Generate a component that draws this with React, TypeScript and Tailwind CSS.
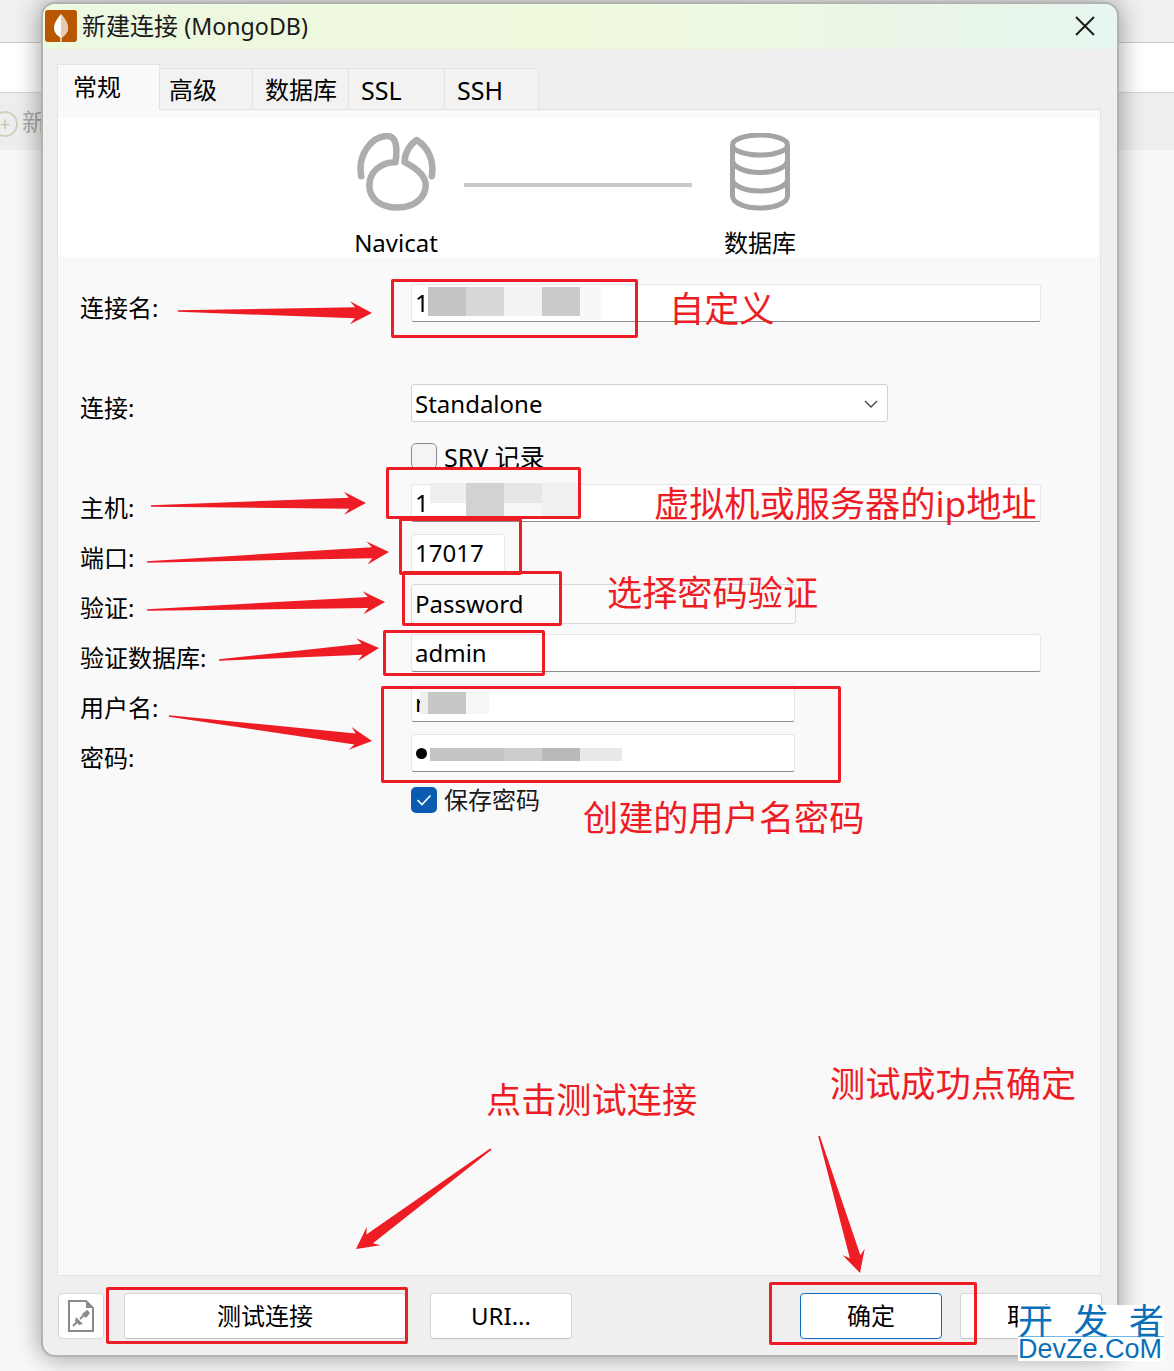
const FONT = "font-['Noto_Sans','Noto_Sans_CJK_SC',sans-serif]";

type Seg = { x: number; y: number; w: number; h: number; c: string };
const mosaics: Seg[] = [
  { x: 428, y: 287, w: 38, h: 29, c: '#c4c4c4' },
  { x: 466, y: 287, w: 38, h: 29, c: '#d8d8d8' },
  { x: 504, y: 287, w: 38, h: 29, c: '#f3f3f3' },
  { x: 542, y: 287, w: 38, h: 29, c: '#cbcbcb' },
  { x: 580, y: 287, w: 21, h: 33, c: '#f8f8f8' },
  { x: 430, y: 483, w: 36, h: 20, c: '#efefef' },
  { x: 466, y: 483, w: 38, h: 33, c: '#d2d2d2' },
  { x: 504, y: 483, w: 38, h: 20, c: '#e6e6e6' },
  { x: 504, y: 503, w: 38, h: 13, c: '#f6f6f6' },
  { x: 542, y: 483, w: 36, h: 33, c: '#f0f0f0' },
  { x: 420, y: 692, w: 8, h: 22, c: '#efefef' },
  { x: 428, y: 692, w: 38, h: 22, c: '#c6c6c6' },
  { x: 466, y: 692, w: 23, h: 22, c: '#f6f6f6' },
  { x: 430, y: 748, w: 74, h: 13, c: '#c4c4c4' },
  { x: 504, y: 748, w: 38, h: 13, c: '#cdcdcd' },
  { x: 542, y: 748, w: 38, h: 13, c: '#b9b9b9' },
  { x: 580, y: 748, w: 42, h: 13, c: '#e8e8e8' },
];

const boxes = [
  [392, 280, 245, 57],
  [387, 468, 193, 50],
  [400, 519, 121, 55],
  [403, 572, 158, 53],
  [384, 631, 160, 44],
  [382, 687, 458, 95],
  [107, 1288, 300, 55],
  [770, 1283, 206, 61],
];

const arrows = [
  [178, 311, 372, 313],
  [151, 506, 366, 503],
  [147, 562, 389, 552],
  [147, 610, 385, 602],
  [219, 660, 379, 648],
  [169, 716, 372, 741],
  [491, 1149, 356, 1249],
  [819, 1136, 860, 1273],
];

function arrowPoints([x1, y1, x2, y2]: number[]) {
  const len = Math.hypot(x2 - x1, y2 - y1);
  const ux = (x2 - x1) / len;
  const uy = (y2 - y1) / len;
  const nx = -uy;
  const ny = ux;
  const at = (back: number, off: number) =>
    `${x2 - ux * back + nx * off},${y2 - uy * back + ny * off}`;
  return [
    at(len, 0.8),
    at(17, 5.5),
    at(22, 11.5),
    `${x2},${y2}`,
    at(22, -11.5),
    at(17, -5.5),
    at(len, -0.8),
  ].join(' ');
}

const Label = ({ children }: { children: string }) => (
  <div className="w-[331px] shrink-0 pt-[7px] text-[24px] leading-[34px] text-black">{children}</div>
);

function Field({ w, children, box }: { w: string; children?: React.ReactNode; box?: boolean }) {
  return (
    <div
      className={`${w} h-[38px] flex items-center pl-[3px] bg-white rounded-[3px] border border-[#e6e6e6] text-[24px] text-black ${
        box ? 'border-[#d2d2d2]' : 'border-b-[#8b8b8b]'
      }`}
    >
      {children}
    </div>
  );
}

function Tab({ label, cls }: { label: string; cls: string }) {
  return (
    <div className={`${cls} h-[42px] bg-[#f2f2f2] border border-l-0 border-[#e3e3e3] leading-[42px]`}>
      {label}
    </div>
  );
}

function Btn({ w, label, primary }: { w: string; label: string; primary?: boolean }) {
  return (
    <div
      className={`${w} h-[46px] shrink-0 flex items-center justify-center bg-white rounded-[4px] border text-[24px] text-black ${
        primary ? 'border-[#0f6cbd]' : 'border-[#d6d6d6] border-b-[#c2c2c2]'
      }`}
    >
      {label}
    </div>
  );
}

const Note = ({ x, y, children }: { x: string; y: string; children: string }) => (
  <div className={`absolute ${x} ${y} text-[35.2px] leading-[44px] font-normal text-[#ee1c25] whitespace-nowrap`}>
    {children}
  </div>
);

export default function App() {
  return (
    <div className={`relative w-[1174px] h-[1371px] overflow-hidden bg-[#f8f8f8] ${FONT}`}>
      <div className="h-[43px] bg-[#f0f0f0] border-b border-[#c9c9c9]" />
      <div className="h-[50px] bg-white border-b border-[#d8d8d8]" />
      <div className="h-[57px] bg-[#eeeeee] flex items-center pl-[22px] text-[24px] text-[#a8a8a8] relative">
        <div className="absolute left-[-8px] top-[18px] w-[26px] h-[26px] rounded-full border-2 border-[#c9d6bc] flex items-center justify-center text-[#c0ccb2] text-[20px] leading-none">
          +
        </div>
        新
      </div>

      {/* dialog window */}
      <div className="absolute left-[41px] top-[2px] w-[1078px] h-[1355px] flex flex-col bg-[#efefef] border-2 border-[#b2b2b2] rounded-[14px] overflow-hidden shadow-[0_0_26px_rgba(0,0,0,0.4)]">
        <div className="h-[45px] shrink-0 flex items-center justify-between bg-gradient-to-r from-[#ecf8e0] via-[#eff9dc] to-[#e7f6ef] pl-[2px] pr-[21px] pb-[2px]">
          <div className="flex items-center gap-[5px]">
            <div className="w-[32px] h-[32px] bg-[#b95600] rounded-[3px] flex items-center justify-center">
              <svg width="32" height="32" viewBox="0 0 32 32">
                <path d="M16 4 C21 10 23 14 23 18 C23 23 19 26 16 28 C13 26 9 23 9 18 C9 14 11 10 16 4 Z" fill="#fff" />
                <path d="M16 4 C21 10 23 14 23 18 C23 23 19 26 16 28 Z" fill="#eac9b0" />
                <rect x="15.4" y="26" width="1.2" height="6" fill="#fff" />
              </svg>
            </div>
            <span className="text-[24px] leading-[32px] text-[#1a1a1a]">
              新建连接 <span className="text-[23.2px]">(MongoDB)</span>
            </span>
          </div>
          <svg width="22" height="22" viewBox="0 0 22 22" fill="none" stroke="#1c1c1c" strokeWidth="2">
            <path d="M2 2 L20 20 M20 2 L2 20" />
          </svg>
        </div>

        <div className="flex-1 flex flex-col pl-[14px] pr-[16px] pt-[15px]">
          <div className="flex items-end h-[46px] -mb-px">
            <div className="w-[103px] h-[46px] bg-[#f9f9f9] border border-b-0 border-[#e3e3e3] pl-[15px] pt-[2px] text-[24px] leading-[40px] z-10">
              常规
            </div>
            <Tab label="高级" cls="w-[93px] pl-[9px] text-[24px]" />
            <Tab label="数据库" cls="w-[96px] pl-[12px] text-[24px]" />
            <Tab label="SSL" cls="w-[96px] pl-[12px] text-[25px]" />
            <Tab label="SSH" cls="w-[94px] pl-[12px] text-[25px]" />
          </div>

          {/* panel */}
          <div className="h-[1167px] bg-[#f9f9f9] border border-[#e3e3e3] pt-[8px]">
            <div className="h-[139px] mr-[2px] bg-white flex pl-[278px] pt-[15px]">
              <div className="w-[120px] flex flex-col items-center">
                <svg className="shrink-0" width="80" height="78" viewBox="357 133 77 77.500" fill="none" stroke="#adadad" strokeWidth="6.500" strokeLinecap="round" strokeLinejoin="round">
                  <path d="M361 176 C357 155 371 136 387 136 C396 136 397 148 395 162 C380 162 369 172 369 185 C369 200 382 207 397 207 C414 207 425 197 425 185 C425 176 418 169 404 162 C404 152 410 144 416 140 C427 147 434 160 431 176" />
                </svg>
                <div className="mt-[18px] text-[24px] leading-[28px] text-black">Navicat</div>
              </div>
              <div className="w-[228px] h-[4px] ml-[8px] mt-[50px] bg-[#c8c8c8]" />
              <div className="w-[120px] ml-[8px] flex flex-col items-center">
                <svg className="shrink-0" width="64" height="78" viewBox="728 133 64 78" fill="none" stroke="#a4a4a4" strokeWidth="5">
                  <ellipse cx="760" cy="145" rx="27.500" ry="10" />
                  <path d="M732.500 145 V196 C732.500 203 745 208 760 208 C775 208 787.500 203 787.500 196 V145" />
                  <path d="M732.500 160 C732.500 167 745 172.500 760 172.500 C775 172.500 787.500 167 787.500 160" />
                  <path d="M732.500 179 C732.500 186 745 191 760 191 C775 191 787.500 186 787.500 179" />
                </svg>
                <div className="mt-[18px] text-[24px] leading-[28px] text-black">数据库</div>
              </div>
            </div>

            {/* form */}
            <div className="pl-[22px] pt-[27px]">
              <div className="flex h-[38px]">
                <Label>连接名:</Label>
                <Field w="w-[630px]">1</Field>
              </div>
              <div className="flex h-[38px] mt-[62px]">
                <Label>连接:</Label>
                <div className="w-[477px] h-[38px] flex items-center justify-between pl-[3px] pr-[9px] pt-[2px] bg-white rounded-[3px] border border-[#d2d2d2] text-[24px] text-black">
                  Standalone
                  <svg width="14" height="8" viewBox="0 0 14 8" fill="none" stroke="#444" strokeWidth="1.300">
                    <path d="M1 1 L7 7 L13 1" />
                  </svg>
                </div>
              </div>
              <div className="flex h-[26px] mt-[21px] overflow-hidden">
                <div className="w-[331px] shrink-0" />
                <div className="w-[26px] h-[26px] rounded-[5px] border border-[#8a8a8a] bg-[#f4f4f4]" />
                <span className="ml-[7px] text-[25px] leading-[28px] text-black">SRV 记录</span>
              </div>
              <div className="flex h-[38px] mt-[15px]">
                <Label>主机:</Label>
                <Field w="w-[630px]">1</Field>
              </div>
              <div className="flex h-[38px] mt-[12px]">
                <Label>端口:</Label>
                <Field w="w-[94px]" box>17017</Field>
              </div>
              <div className="flex h-[40px] mt-[12px]">
                <Label>验证:</Label>
                <div className="w-[385px] h-[40px] flex items-center pl-[3px] bg-[#fbfbfb] rounded-[3px] border border-[#d8d8d8] text-[24px] text-black">
                  Password
                </div>
              </div>
              <div className="flex h-[38px] mt-[10px]">
                <Label>验证数据库:</Label>
                <Field w="w-[630px]">admin</Field>
              </div>
              <div className="flex h-[38px] mt-[12px]">
                <Label>用户名:</Label>
                <Field w="w-[384px]">r</Field>
              </div>
              <div className="flex h-[38px] mt-[12px]">
                <Label>密码:</Label>
                <Field w="w-[384px]">
                  <span className="w-[11px] h-[11px] ml-[1px] rounded-full bg-black" />
                </Field>
              </div>
              <div className="flex items-center h-[26px] mt-[15px]">
                <div className="w-[331px] shrink-0" />
                <div className="w-[26px] h-[26px] rounded-[5px] bg-[#0a5cb0] flex items-center justify-center">
                  <svg width="16" height="12" viewBox="0 0 16 12" fill="none" stroke="#fff" strokeWidth="1.600">
                    <path d="M1.500 6 L6 10.500 L14.500 1.500" />
                  </svg>
                </div>
                <span className="ml-[7px] text-[24px] leading-[28px] text-[#1a1a1a]">保存密码</span>
              </div>
            </div>
          </div>

          {/* footer */}
          <div className="flex mt-[17px] ml-[1px]">
            <div className="w-[46px] h-[46px] shrink-0 mr-[20px] flex items-center justify-center bg-white rounded-[4px] border border-[#d6d6d6]">
              <svg width="26" height="32" viewBox="0 0 26 32" fill="none">
                <path d="M1 1 H18 L25 8 V31 H1 Z" stroke="#8a8a8a" strokeWidth="2" />
                <path d="M18 1 V8 H25 Z" fill="#8a8a8a" />
                <path d="M5 26 L9 22 M12 19 L20 11" stroke="#8a8a8a" strokeWidth="2" />
                <path d="M8 17 L15 24 L11 25 L7 21 Z M14 14 L18 18 L22 13 L19 10 Z" fill="#8a8a8a" />
              </svg>
            </div>
            <Btn w="w-[282px]" label="测试连接" />
            <div className="w-[24px] shrink-0" />
            <Btn w="w-[142px]" label="URI..." />
            <div className="w-[228px] shrink-0" />
            <Btn w="w-[142px]" label="确定" primary />
            <div className="w-[18px] shrink-0" />
            <Btn w="w-[142px]" label="取消" />
          </div>
        </div>
      </div>

      {/* redaction mosaics */}
      {mosaics.map((m, i) => (
        <div
          key={i}
          className="absolute"
          style={{ left: m.x, top: m.y, width: m.w, height: m.h, background: m.c }}
        />
      ))}

      {/* annotations */}
      {boxes.map(([x, y, w, h], i) => (
        <div
          key={i}
          className="absolute border-[3px] border-[#ee1c25] rounded-[2px]"
          style={{ left: x - 1, top: y - 1, width: w + 2, height: h + 2 }}
        />
      ))}
      <svg className="absolute left-0 top-0" width="1174" height="1371" fill="#ee1c25">
        {arrows.map((a, i) => (
          <polygon key={i} points={arrowPoints(a)} />
        ))}
      </svg>
      <Note x="left-[669px]" y="top-[286px]">自定义</Note>
      <Note x="left-[654px]" y="top-[481px]">虚拟机或服务器的ip地址</Note>
      <Note x="left-[607px]" y="top-[570px]">选择密码验证</Note>
      <Note x="left-[583px]" y="top-[795px]">创建的用户名密码</Note>
      <Note x="left-[486px]" y="top-[1077px]">点击测试连接</Note>
      <Note x="left-[830px]" y="top-[1061px]">测试成功点确定</Note>

      {/* watermark */}
      <div className="absolute left-[1018px] top-[1305px] w-[146px] h-[56px] bg-white flex flex-col text-[#0b6fb8]">
        <div className="h-[32px] flex justify-between text-[35px] leading-[32px] border-b border-[#6db7e6]">
          <span>开</span>
          <span>发</span>
          <span>者</span>
        </div>
        <div className="text-[27px] leading-[24px] whitespace-nowrap font-['Liberation_Sans',sans-serif]">DevZe.CoM</div>
      </div>
    </div>
  );
}
